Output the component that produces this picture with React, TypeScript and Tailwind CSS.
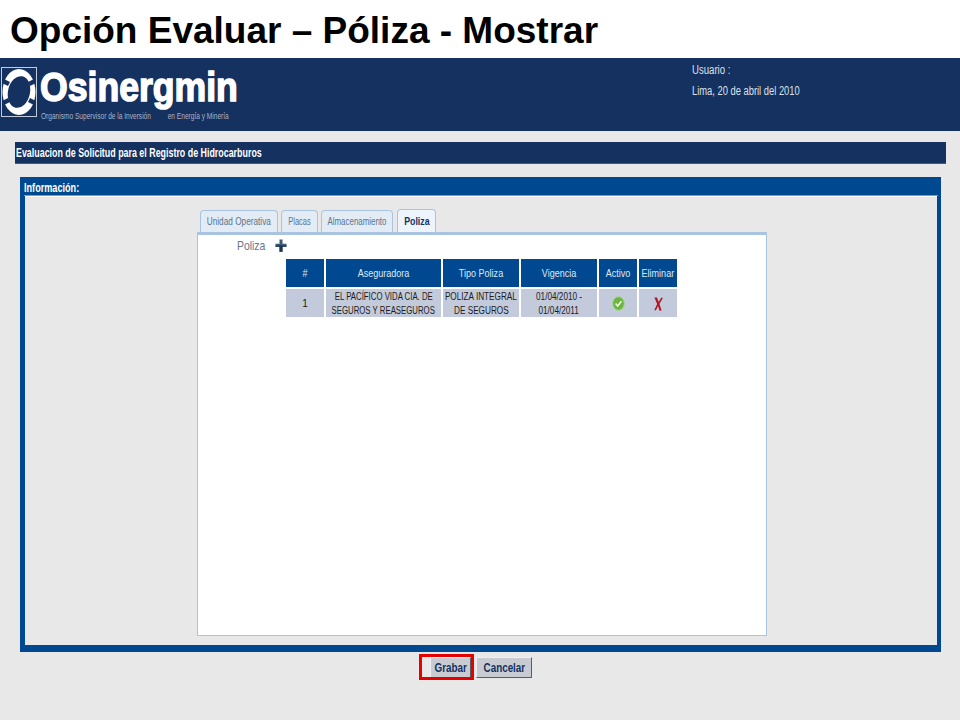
const sans = "font-['Liberation_Sans',Arial,sans-serif]";

function Squeeze({ className = "scale-x-[0.82]", children }: { className?: string; children: React.ReactNode }) {
  return <span className={`inline-block whitespace-nowrap origin-center ${className}`}>{children}</span>;
}

function Logo() {
  return (
    <div className="flex items-start pl-px pt-[9px]">
      <svg width="36" height="50" viewBox="0 0 36 50" className="shrink-0">
        <rect x="0.5" y="0.5" width="35" height="49" fill="#14315f" stroke="#c3ccd9" strokeWidth="1" />
        <ellipse cx="18" cy="25" rx="16.5" ry="23" fill="#fff" />
        <ellipse cx="18" cy="25" rx="11" ry="16" fill="#14315f" transform="rotate(12 18 25)" />
        <path d="M3 12 L9 15 L7 19 L1 16 Z M33 12 L27 15 L29 19 L35 16 Z M3 38 L9 35 L7 31 L1 34 Z M33 38 L27 35 L29 31 L35 34 Z" fill="#14315f" />
      </svg>
      <div className="ml-[3px] flex flex-col">
        <span className="block h-[38px] w-[190px] text-[40px] leading-[40px] font-bold text-white origin-left scale-x-[0.89] whitespace-nowrap [-webkit-text-stroke:1.5px_white]">Osinergmin</span>
        <span className="block text-[9px] leading-[10px] mt-[6px] ml-px text-[#aab4c6] origin-left scale-x-[0.73] whitespace-nowrap">Organismo Supervisor de la Inversión <span className="inline-block w-[18px]" /> en Energía y Minería</span>
      </div>
    </div>
  );
}

function Tab({ label, active, w, squeeze }: { label: string; active?: boolean; w: string; squeeze: string }) {
  return (
    <div className={`${w} flex items-center justify-center rounded-t-[4px] border border-b-0 border-[#a9c4e0] text-[11px] ${active ? "h-[23px] bg-[#eef4fb] font-bold text-[#14315f]" : "h-[22px] bg-[#e3ebf5] text-[#5a7590]"}`}>
      <Squeeze className={squeeze}>{label}</Squeeze>
    </div>
  );
}

function Head({ label }: { label: string }) {
  return <div className="bg-[#004990] text-[#dfe8f2] text-[11px] flex items-center justify-center"><Squeeze>{label}</Squeeze></div>;
}

function Cell({ children }: { children: React.ReactNode }) {
  return <div className="bg-[#c2cadb] text-[#1c1c1c] text-[10px] leading-[14px] pt-[1px] flex flex-col items-center justify-center text-center">{children}</div>;
}

export default function App() {
  return (
    <div className={`${sans} w-[960px] h-[720px] bg-[#e8e8e8] flex flex-col overflow-hidden`}>
      <div className="h-[58px] bg-white pl-[10px] pt-[9px] text-[37px] leading-[44px] font-bold text-black whitespace-nowrap">
        Opción Evaluar – Póliza - Mostrar
      </div>

      <div className="h-[73px] bg-[#14315f] flex justify-between">
        <Logo />
        <div className="w-[268px] pt-[4px] text-[12px] text-[#dbe1ea]">
          <div className="h-[18px] leading-[16px]"><span className="inline-block origin-left scale-x-[0.8] whitespace-nowrap">Usuario :</span></div>
          <div className="h-[18px] mt-[3px] leading-[16px]"><span className="inline-block origin-left scale-x-[0.78] whitespace-nowrap">Lima, 20 de abril del 2010</span></div>
        </div>
      </div>

      <div className="mt-[11px] ml-[15px] w-[931px] h-[22px] bg-[#14315f] border-b border-[#3d5a94] text-white font-bold text-[12px] leading-[22px] pl-[1px] whitespace-nowrap">
        <span className="inline-block origin-left scale-x-[0.74]">Evaluacion de Solicitud para el Registro de Hidrocarburos</span>
      </div>

      <div className="mt-[13px] ml-[20px] w-[921px] h-[475px] flex flex-col border-l-[5px] border-r-[4px] border-b-[7px] border-[#004990]">
        <div className="h-[19px] shrink-0 -mx-px bg-[#004990] border-b border-[#7c9cc4] text-white font-bold text-[12px] leading-[22px] whitespace-nowrap">
          <span className="inline-block origin-left scale-x-[0.76]">Información:</span>
        </div>

        <div className="flex-1 flex border-t border-white">
          <div className="ml-[172px] w-[570px] flex flex-col mt-[12px] mb-[9px] shrink-0">
            <div className="flex items-end pl-[3px]">
              <Tab label="Unidad Operativa" w="w-[78px] mr-[3px]" squeeze="scale-x-[0.75]" />
              <Tab label="Placas" w="w-[37px] mr-[3px]" squeeze="scale-x-[0.68]" />
              <Tab label="Almacenamiento" w="w-[72px] mr-[4px]" squeeze="scale-x-[0.72]" />
              <Tab label="Poliza" active w="w-[39px]" squeeze="scale-x-[0.8]" />
            </div>
            <div className="flex-1 bg-white border border-[#a9c4e0] border-t-[3px]">
              <div className="flex items-center h-[21px] pl-[39px] pt-px text-[13px] text-[#66788f]">
                <span className="inline-block origin-left scale-x-[0.8] w-[38px] whitespace-nowrap">Poliza</span>
                <svg width="12" height="13" viewBox="0 0 12 13" className="mb-[1px]">
                  <path d="M4.5 0.5h3v4.2h4v3h-4v5h-3v-5h-4v-3h4z" fill="#3c5a78" />
                  <path d="M4.5 7.7h3v5h-3z M0.5 6.5h11v1.2h-11z" fill="#1f3550" />
                </svg>
              </div>
              <div className="ml-[88px] mt-[3px] w-[391px] grid grid-cols-[38px_115px_76px_76px_38px_38px] grid-rows-[28px_28px] gap-[2px]">
                <Head label="#" />
                <Head label="Aseguradora" />
                <Head label="Tipo Poliza" />
                <Head label="Vigencia" />
                <Head label="Activo" />
                <Head label="Eliminar" />
                <Cell>1</Cell>
                <Cell><Squeeze className="scale-x-[0.78]">EL PACÍFICO VIDA CIA. DE</Squeeze><Squeeze className="scale-x-[0.78]">SEGUROS Y REASEGUROS</Squeeze></Cell>
                <Cell><Squeeze>POLIZA INTEGRAL</Squeeze><Squeeze>DE SEGUROS</Squeeze></Cell>
                <Cell><Squeeze>01/04/2010 -</Squeeze><Squeeze>01/04/2011</Squeeze></Cell>
                <Cell>
                  <svg width="13" height="15" viewBox="0 0 13 15">
                    <ellipse cx="6.5" cy="7.5" rx="5.8" ry="6.8" fill="#6cb544" stroke="#a5d48a" />
                    <path d="M3.6 7.5 L5.7 10 L9.4 5.2" fill="none" stroke="#eafbe0" strokeWidth="1.6" />
                  </svg>
                </Cell>
                <Cell>
                  <svg width="9" height="14" viewBox="0 0 9 14">
                    <path d="M0.4 0.6 L3 0.4 L4.6 5 L7.4 0.4 L8.8 1 L5.4 7 L7.6 13.4 L5.6 13.8 L4 9 L1.8 13.6 L0.4 13 L3.2 7 Z" fill="#b3121d" />
                  </svg>
                </Cell>
              </div>
            </div>
          </div>
        </div>
      </div>

      <div className="relative ml-[430px] mt-[5px] flex gap-[5px]">
        <div className="absolute -left-[11px] -top-[3px] w-[55px] h-[26px] border-[3px] border-[#e60000]" />
        <button className="w-[41px] h-[21px] bg-[#c8ccd2] border border-[#eef0f3] border-r-[#5c5c5c] border-b-[#5c5c5c] text-[#14315f] font-bold text-[12px] leading-[18px]"><Squeeze>Grabar</Squeeze></button>
        <button className="w-[56px] h-[21px] bg-[#c8ccd2] border border-[#eef0f3] border-r-[#5c5c5c] border-b-[#5c5c5c] text-[#14315f] font-bold text-[12px] leading-[18px]"><Squeeze>Cancelar</Squeeze></button>
      </div>
    </div>
  );
}
